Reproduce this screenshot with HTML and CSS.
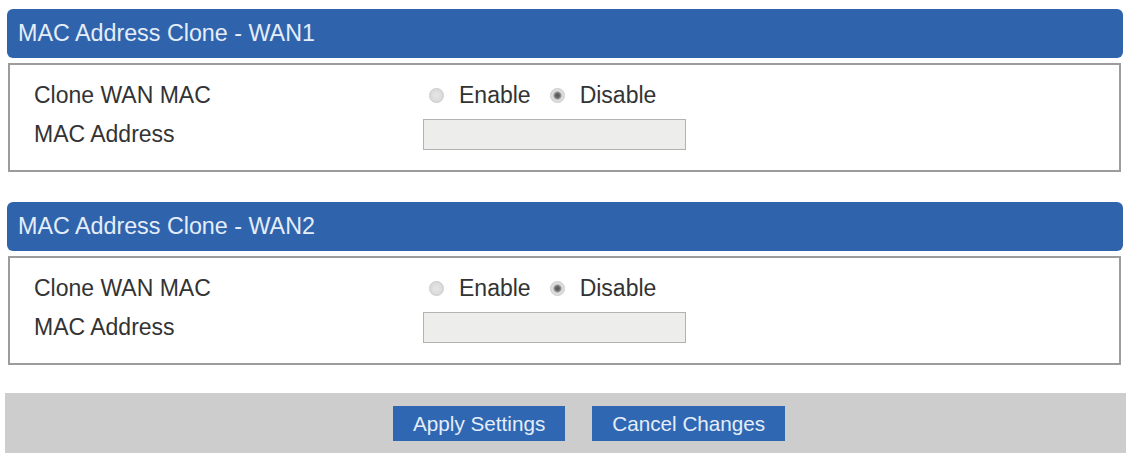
FILE: index.html
```html
<!DOCTYPE html>
<html lang="en">
<head>
<meta charset="utf-8">
<title>MAC Address Clone</title>
<link rel="stylesheet" href="styles.css">
</head>
<body>
<div class="page">
  <section class="panel">
    <div class="panel-head">MAC Address Clone - WAN1</div>
    <div class="panel-body">
      <div class="label">Clone WAN MAC</div>
      <div class="control">
        <label class="opt"><input type="radio" name="w1" class="radio"><span>Enable</span></label>
        <label class="opt"><input type="radio" name="w1" class="radio" checked><span>Disable</span></label>
      </div>
      <div class="label">MAC Address</div>
      <div class="control"><input type="text" class="field" disabled></div>
    </div>
  </section>

  <section class="panel">
    <div class="panel-head">MAC Address Clone - WAN2</div>
    <div class="panel-body">
      <div class="label">Clone WAN MAC</div>
      <div class="control">
        <label class="opt"><input type="radio" name="w2" class="radio"><span>Enable</span></label>
        <label class="opt"><input type="radio" name="w2" class="radio" checked><span>Disable</span></label>
      </div>
      <div class="label">MAC Address</div>
      <div class="control"><input type="text" class="field" disabled></div>
    </div>
  </section>

  <div class="footer">
    <button class="btn">Apply Settings</button>
    <button class="btn">Cancel Changes</button>
  </div>
</div>
</body>
</html>
```

FILE: styles.css
```css
html, body {
  margin: 0;
  padding: 0;
  background: #ffffff;
}

body {
  font-family: "Liberation Sans", Arial, sans-serif;
  color: #333333;
}

.page {
  display: flex;
  flex-direction: column;
  padding-top: 9px;
  width: 1126px;
}

.panel {
  display: flex;
  flex-direction: column;
  margin: 0 3px 30px 7px;
}

.panel-head {
  height: 49px;
  display: flex;
  align-items: center;
  padding-left: 11px;
  background: #2f64ac;
  color: #e4edf9;
  font-size: 23.3px;
  border-radius: 6px;
  box-sizing: border-box;
}

.panel-body {
  margin: 5px 2px 0 1px;
  border: 2px solid #9c9c9c;
  height: 109px;
  box-sizing: border-box;
  padding: 11px 0 0 24px;
  display: grid;
  grid-template-columns: 389px 1fr;
  grid-template-rows: 38px 40px;
  align-items: center;
}

.label {
  font-size: 23px;
  color: #333333;
}

.control {
  display: flex;
  align-items: center;
}

.opt {
  display: flex;
  align-items: center;
  font-size: 23px;
  color: #333333;
  margin-right: 19px;
}

.radio {
  appearance: none;
  -webkit-appearance: none;
  width: 15px;
  height: 15px;
  margin: 0 15px 0 6px;
  border-radius: 50%;
  border: 1px solid #cacaca;
  background: radial-gradient(circle at 50% 50%, #e6e6e6 0, #d9d9d9 70%, #cfcfcf 100%);
  box-sizing: border-box;
}

.radio:checked {
  background: radial-gradient(circle at 50% 50%, #555555 0, #666666 2px, #9a9a9a 3.5px, #dcdcdc 4.5px, #e2e2e2 100%);
}

.opt + .opt .radio {
  margin-left: 0;
}

.field {
  width: 263px;
  height: 31px;
  margin: 0;
  border: 1px solid #b2b2b2;
  background: #ededeb;
  box-sizing: border-box;
  font-family: inherit;
}

.footer {
  margin: -2px 0 0 5px;
  height: 60px;
  background: #cdcdcd;
  display: flex;
  align-items: flex-start;
  gap: 27px;
  padding: 13px 0 0 388px;
  box-sizing: border-box;
}

.btn {
  height: 35px;
  padding: 0 20px;
  border: none;
  margin: 0;
  background: #2f67b2;
  color: #e4edf9;
  font-family: "Liberation Sans", Arial, sans-serif;
  font-size: 20.7px;
  cursor: pointer;
}
```
